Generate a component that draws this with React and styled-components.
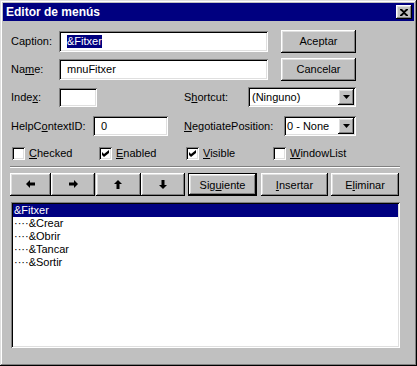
import React from "react";
import styled, { createGlobalStyle, css } from "styled-components";

const GlobalStyle = createGlobalStyle`
  html, body {
    margin: 0;
    padding: 0;
    background: #c0c0c0;
  }
  body {
    font-family: "Liberation Sans", Arial, sans-serif;
    font-size: 11px;
    color: #000;
  }
`;

const raised = css`
  box-shadow: inset -1px -1px #000, inset 1px 1px #fff, inset -2px -2px #808080,
    inset 2px 2px #dfdfdf;
`;

const sunken = css`
  box-shadow: inset 1px 1px #808080, inset -1px -1px #fff, inset 2px 2px #000,
    inset -2px -2px #dfdfdf;
`;

const Window = styled.div`
  width: 417px;
  height: 366px;
  box-sizing: border-box;
  padding: 3px;
  background: #c0c0c0;
  box-shadow: inset -1px -1px #000, inset 1px 1px #dfdfdf, inset -2px -2px #808080,
    inset 2px 2px #fff;
  display: flex;
  flex-direction: column;
`;

const TitleBar = styled.div`
  height: 18px;
  background: #000080;
  color: #fff;
  font-weight: bold;
  font-size: 12px;
  display: flex;
  align-items: center;
  justify-content: space-between;
  padding: 0 2px 0 3px;
`;

const CloseButton = styled.div`
  width: 16px;
  height: 14px;
  background: #c0c0c0;
  ${raised};
  display: flex;
  align-items: center;
  justify-content: center;
`;

const Body = styled.div`
  padding: 6px 0 0 8px;
  display: flex;
  flex-direction: column;
`;

const Row = styled.div`
  display: flex;
  align-items: center;
  height: ${(p) => p.h || 28}px;
`;

const Label = styled.div`
  width: ${(p) => p.w}px;
  margin-left: ${(p) => p.ml || 0}px;
  white-space: nowrap;
`;

const TextBox = styled.div`
  width: ${(p) => p.w}px;
  height: ${(p) => p.h}px;
  box-sizing: border-box;
  background: #fff;
  ${sunken};
  padding-left: 8px;
  display: flex;
  align-items: center;
  white-space: nowrap;
`;

const Selected = styled.span`
  background: #000080;
  color: #fff;
  line-height: 13px;
`;

const Button = styled.div`
  width: ${(p) => p.w}px;
  height: 23px;
  margin-left: ${(p) => p.ml || 0}px;
  box-sizing: border-box;
  background: #c0c0c0;
  display: flex;
  align-items: center;
  justify-content: center;
  ${(p) =>
    p.$default
      ? css`
          box-shadow: inset 0 0 0 1px #000, inset -2px -2px #000, inset 2px 2px #fff,
            inset -3px -3px #808080, inset 3px 3px #dfdfdf;
        `
      : raised};
`;

const Combo = styled.div`
  width: ${(p) => p.w}px;
  height: ${(p) => p.h}px;
  box-sizing: border-box;
  background: #fff;
  ${sunken};
  padding: 2px;
  display: flex;
`;

const ComboText = styled.div`
  flex: 1;
  padding-left: ${(p) => p.pl || 2}px;
  display: flex;
  align-items: center;
  white-space: nowrap;
`;

const DropButton = styled.div`
  width: 16px;
  background: #c0c0c0;
  ${raised};
  display: flex;
  align-items: center;
  justify-content: center;
`;

const CheckRow = styled.div`
  display: grid;
  grid-template-columns: repeat(4, 87px);
  align-items: center;
  height: 26px;
  padding-left: 1px;
`;

const CheckItem = styled.div`
  display: flex;
  align-items: center;
  gap: 4px;
`;

const CheckBox = styled.div`
  width: 13px;
  height: 13px;
  box-sizing: border-box;
  background: #fff;
  ${sunken};
  display: flex;
  align-items: center;
  justify-content: center;
`;

const Separator = styled.div`
  margin-left: -1px;
  width: 390px;
  border-top: 1px solid #808080;
  border-bottom: 1px solid #fff;
`;

const ButtonRow = styled.div`
  display: flex;
  margin: 5px 0 0 -1px;
`;

const ListBox = styled.div`
  margin-top: 6px;
  width: 389px;
  height: 146px;
  box-sizing: border-box;
  background: #fff;
  ${sunken};
  padding: 2px;
`;

const ListItem = styled.div`
  height: 13px;
  line-height: 13px;
  padding-left: 1px;
  white-space: nowrap;
  background: ${(p) => (p.$active ? "#000080" : "transparent")};
  color: ${(p) => (p.$active ? "#fff" : "#000")};
`;

const CloseGlyph = () => (
  <svg width="8" height="7" viewBox="0 0 8 7">
    <path
      d="M0 0h2l2 2 2-2h2v1L5 3.5 8 6v1H6L4 5 2 7H0V6l3-2.5L0 1z"
      fill="#000"
    />
  </svg>
);

const DownTriangle = () => (
  <svg width="7" height="4" viewBox="0 0 7 4">
    <path d="M0 0h7L3.5 4z" fill="#000" />
  </svg>
);

const CheckMark = () => (
  <svg width="7" height="7" viewBox="0 0 7 7">
    <path d="M0 2l2 2 5-4v3L2 7 0 5z" fill="#000" />
  </svg>
);

const arrowPaths = {
  left: "M0 4L4 0v2.5h5v3H4V8z",
  right: "M9 4L5 0v2.5H0v3h5V8z",
  up: "M4 0l4 4H5.5v5h-3V4H0z",
  down: "M4 9l4-4H5.5V0h-3v5H0z",
};

const Arrow = ({ dir }) => (
  <svg width="9" height="9" viewBox="0 0 9 9">
    <path d={arrowPaths[dir]} fill="#000" />
  </svg>
);

const checks = [
  { label: "hecked", key: "C", on: false },
  { label: "nabled", key: "E", on: true },
  { label: "isible", key: "V", on: true },
  { label: "indowList", key: "W", on: false },
];

const items = [
  { text: "&Fitxer", level: 0 },
  { text: "&Crear", level: 1 },
  { text: "&Obrir", level: 1 },
  { text: "&Tancar", level: 1 },
  { text: "&Sortir", level: 1 },
];

export default function App() {
  return (
    <>
      <GlobalStyle />
      <Window>
        <TitleBar>
          <span>Editor de menús</span>
          <CloseButton>
            <CloseGlyph />
          </CloseButton>
        </TitleBar>
        <Body>
          <Row>
            <Label w={48}>Caption:</Label>
            <TextBox w={209} h={21}>
              <Selected>&amp;Fitxer</Selected>
            </TextBox>
            <Button w={75} ml={13}>
              Aceptar
            </Button>
          </Row>
          <Row>
            <Label w={48}>
              Na<u>m</u>e:
            </Label>
            <TextBox w={209} h={21}>
              mnuFitxer
            </TextBox>
            <Button w={75} ml={13}>
              Cancelar
            </Button>
          </Row>
          <Row>
            <Label w={48}>
              Inde<u>x</u>:
            </Label>
            <TextBox w={38} h={19} />
            <Label w={64} ml={87}>
              S<u>h</u>ortcut:
            </Label>
            <Combo w={108} h={20}>
              <ComboText>(Ninguno)</ComboText>
              <DropButton>
                <DownTriangle />
              </DropButton>
            </Combo>
          </Row>
          <Row h={29}>
            <Label w={82}>
              HelpC<u>o</u>ntextID:
            </Label>
            <TextBox w={75} h={20}>
              0
            </TextBox>
            <Label w={100} ml={16}>
              <u>N</u>egotiatePosition:
            </Label>
            <Combo w={72} h={20}>
              <ComboText pl={1}>0 - None</ComboText>
              <DropButton>
                <DownTriangle />
              </DropButton>
            </Combo>
          </Row>
          <CheckRow>
            {checks.map((c) => (
              <CheckItem key={c.key}>
                <CheckBox>{c.on && <CheckMark />}</CheckBox>
                <span>
                  <u>{c.key}</u>
                  {c.label}
                </span>
              </CheckItem>
            ))}
          </CheckRow>
          <Separator />
          <ButtonRow>
            <Button w={41}>
              <Arrow dir="left" />
            </Button>
            <Button w={44}>
              <Arrow dir="right" />
            </Button>
            <Button w={45} ml={1}>
              <Arrow dir="up" />
            </Button>
            <Button w={44}>
              <Arrow dir="down" />
            </Button>
            <Button w={69} ml={3} $default>
              Sig<u>u</u>iente
            </Button>
            <Button w={67} ml={4}>
              <u>I</u>nsertar
            </Button>
            <Button w={68} ml={3}>
              E<u>l</u>iminar
            </Button>
          </ButtonRow>
          <ListBox>
            {items.map((it, i) => (
              <ListItem key={it.text} $active={i === 0}>
                {"····".repeat(it.level)}
                {it.text}
              </ListItem>
            ))}
          </ListBox>
        </Body>
      </Window>
    </>
  );
}
